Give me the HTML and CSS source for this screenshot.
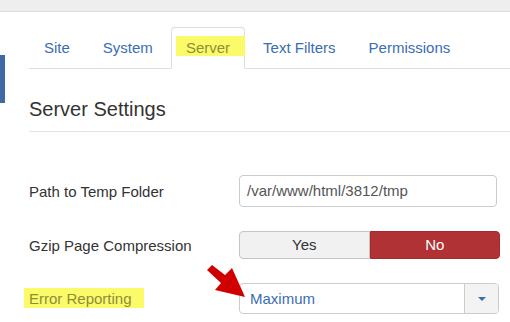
FILE: index.html
```html
<!DOCTYPE html>
<html>
<head>
<meta charset="utf-8">
<link rel="stylesheet" href="styles.css">
</head>
<body>
<div class="topbar"></div>
<div class="layout">
  <div class="side"><div class="side-bar"></div></div>
  <div class="main">
    <ul class="tabs">
      <li class="tab"><a>Site</a></li>
      <li class="tab"><a>System</a></li>
      <li class="tab active"><a><span class="hl hl-tab">Server</span></a></li>
      <li class="tab"><a>Text Filters</a></li>
      <li class="tab"><a>Permissions</a></li>
    </ul>
    <h2 class="heading">Server Settings</h2>
    <div class="form">
      <div class="row row-input">
        <label class="label">Path to Temp Folder</label>
        <div class="input">/var/www/html/3812/tmp</div>
      </div>
      <div class="row row-btns">
        <label class="label">Gzip Page Compression</label>
        <div class="btn-group">
          <div class="btn btn-yes">Yes</div>
          <div class="btn btn-no">No</div>
        </div>
      </div>
      <div class="row row-select">
        <label class="label"><span class="hl hl-label">Error Reporting</span></label>
        <div class="select">
          <span class="select-value">Maximum</span>
          <span class="select-arrow"><span class="caret"></span></span>
        </div>
        <svg class="pointer" width="46" height="40" viewBox="0 0 46 40">
          <path d="M1 6 L6 1 L19 11 L26 4 L39 33 L9 26 L15 19 Z" fill="#d00000"/>
        </svg>
      </div>
    </div>
  </div>
</div>
</body>
</html>
```
FILE: styles.css
```css
html, body {
  margin: 0;
  padding: 0;
  background: #fff;
  font-family: "Liberation Sans", Arial, sans-serif;
  color: #333;
}
.topbar {
  height: 11px;
  background: #eeeeee;
  border-bottom: 1px solid #dddddd;
}
.layout {
  display: flex;
}
.side {
  width: 29px;
  flex: none;
}
.side-bar {
  margin-top: 43px;
  width: 5px;
  height: 48px;
  background: #3f69a6;
}
.main {
  flex: 1;
  padding-top: 15px;
}
.tabs {
  list-style: none;
  margin: 0;
  padding: 0;
  display: flex;
  border-bottom: 1px solid #dddddd;
}
.tab a {
  display: block;
  padding: 10px 14px;
  line-height: 20px;
  font-size: 15px;
  color: #3a6db3;
  border: 1px solid transparent;
  border-radius: 4px 4px 0 0;
  margin-right: 3px;
  margin-bottom: -1px;
}
.tab.active a {
  border-color: #dddddd #dddddd transparent;
  background: #fff;
}
.hl {
  position: relative;
  z-index: 0;
  color: #8d8d3a;
}
.hl::before {
  content: "";
  position: absolute;
  z-index: -1;
  background: #fbfb6a;
}
.hl-tab::before {
  left: -10px;
  right: -15px;
  top: -3px;
  bottom: 0;
}
.hl-label::before {
  left: -5px;
  right: -12px;
  top: -2px;
  bottom: -1px;
}
.heading {
  margin: 29px 0 0;
  font-size: 20px;
  font-weight: normal;
  line-height: 22px;
  padding-bottom: 11px;
  border-bottom: 1px solid #e3e3e3;
  color: #333;
}
.form {
  margin-top: 43px;
  display: flex;
  flex-direction: column;
  gap: 24px;
}
.row {
  display: flex;
  align-items: center;
  position: relative;
}
.label {
  width: 210px;
  flex: none;
  font-size: 15px;
  line-height: 17px;
  color: #333;
}
.input {
  box-sizing: border-box;
  width: 258px;
  height: 32px;
  border: 1px solid #cccccc;
  border-radius: 4px;
  padding: 0 7px;
  font-size: 15px;
  line-height: 30px;
  color: #555;
}
.btn-group {
  display: flex;
  width: 261px;
  height: 28px;
}
.btn {
  box-sizing: border-box;
  flex: 1;
  text-align: center;
  font-size: 15px;
  line-height: 26px;
  border: 1px solid #c4c4c4;
}
.btn-yes {
  background: #f1f1f1;
  color: #333;
  border-radius: 4px 0 0 4px;
}
.btn-no {
  background: #b03234;
  border-color: #a42a2c;
  color: #fff;
  border-radius: 0 4px 4px 0;
}
.select {
  box-sizing: border-box;
  width: 260px;
  height: 31px;
  border: 1px solid #cccccc;
  border-radius: 4px;
  display: flex;
  overflow: hidden;
}
.select-value {
  flex: 1;
  padding-left: 10px;
  font-size: 15px;
  line-height: 29px;
  color: #3a6db3;
}
.select-arrow {
  width: 33px;
  background: #f3f3f3;
  border-left: 1px solid #cccccc;
  display: flex;
  align-items: center;
  justify-content: center;
}
.caret {
  width: 0;
  height: 0;
  border-left: 4px solid transparent;
  border-right: 4px solid transparent;
  border-top: 4px solid #3a6db3;
}
.pointer {
  position: absolute;
  left: 177px;
  top: -19px;
}
```
